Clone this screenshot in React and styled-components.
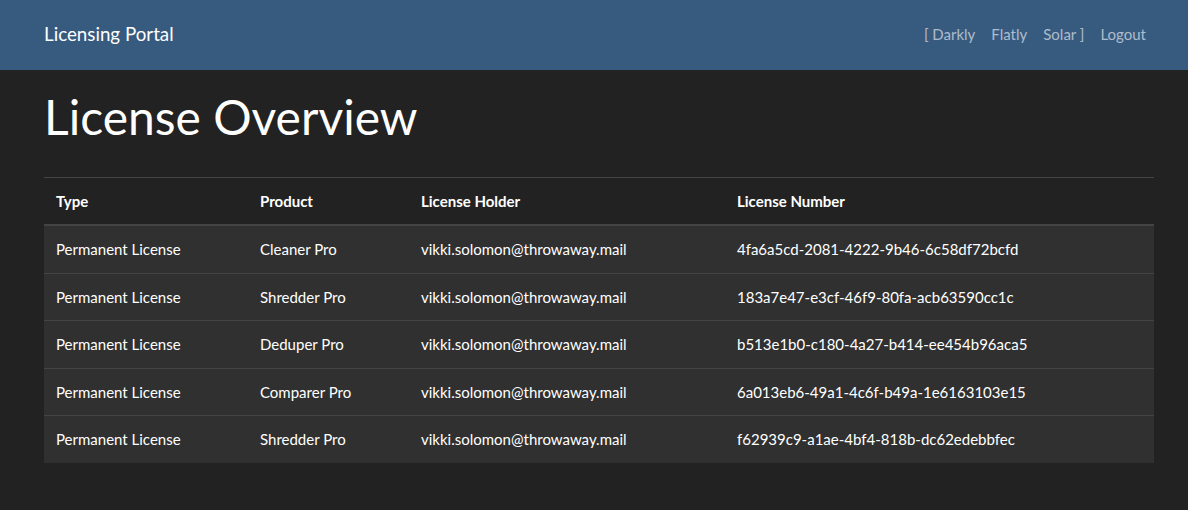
import styled, { createGlobalStyle } from "styled-components"

const GlobalStyle = createGlobalStyle`
    html, body {
        margin: 0;
        padding: 0;
        background: #222222;
        color: #ffffff;
        font-family: Lato, "Noto Sans", sans-serif;
        font-size: 15px;
        line-height: 1.5;
    }
`

const Navbar = styled.nav`
    background: #375a7f;
    height: 70px;
    box-sizing: border-box;
    display: flex;
    align-items: center;
    justify-content: space-between;
    padding: 0 34px 2px 44px;
`

const Brand = styled.a`
    color: #ffffff;
    font-size: 18.75px;
    text-decoration: none;
`

const NavLinks = styled.div`
    display: flex;
    align-items: center;
`

const NavLink = styled.a`
    color: rgba(255, 255, 255, 0.6);
    padding: 0 8px;
    font-size: 15px;
    text-decoration: none;
`

const Main = styled.main`
    padding: 0 34px 0 44px;
`

const Title = styled.h1`
    font-size: 48px;
    font-weight: 400;
    line-height: 1.2;
    margin: 18px 0 31px;
`

const Table = styled.table`
    width: 1110px;
    border-collapse: collapse;
    table-layout: fixed;
`

const Th = styled.th`
    text-align: left;
    font-weight: 700;
    padding: 12px;
    border-top: 1px solid #444444;
    border-bottom: 2px solid #444444;
    width: ${(p) => p.w}px;
`

const Row = styled.tr`
    background: #303030;
`

const Td = styled.td`
    padding: 12px;
    border-top: 1px solid #444444;
    white-space: nowrap;
`

const licenses = [
    ["Permanent License", "Cleaner Pro", "vikki.solomon@throwaway.mail", "4fa6a5cd-2081-4222-9b46-6c58df72bcfd"],
    ["Permanent License", "Shredder Pro", "vikki.solomon@throwaway.mail", "183a7e47-e3cf-46f9-80fa-acb63590cc1c"],
    ["Permanent License", "Deduper Pro", "vikki.solomon@throwaway.mail", "b513e1b0-c180-4a27-b414-ee454b96aca5"],
    ["Permanent License", "Comparer Pro", "vikki.solomon@throwaway.mail", "6a013eb6-49a1-4c6f-b49a-1e6163103e15"],
    ["Permanent License", "Shredder Pro", "vikki.solomon@throwaway.mail", "f62939c9-a1ae-4bf4-818b-dc62edebbfec"],
]

export default function App() {
    return (
        <>
            <GlobalStyle />
            <Navbar>
                <Brand href="#">Licensing Portal</Brand>
                <NavLinks>
                    <NavLink href="#">[ Darkly</NavLink>
                    <NavLink href="#">Flatly</NavLink>
                    <NavLink href="#">Solar ]</NavLink>
                    <NavLink href="#">Logout</NavLink>
                </NavLinks>
            </Navbar>
            <Main>
                <Title>License Overview</Title>
                <Table>
                    <thead>
                        <tr>
                            <Th w={180}>Type</Th>
                            <Th w={137}>Product</Th>
                            <Th w={292}>License Holder</Th>
                            <Th w={405}>License Number</Th>
                        </tr>
                    </thead>
                    <tbody>
                        {licenses.map((l, i) => (
                            <Row key={i}>
                                {l.map((c, j) => <Td key={j}>{c}</Td>)}
                            </Row>
                        ))}
                    </tbody>
                </Table>
            </Main>
        </>
    )
}
